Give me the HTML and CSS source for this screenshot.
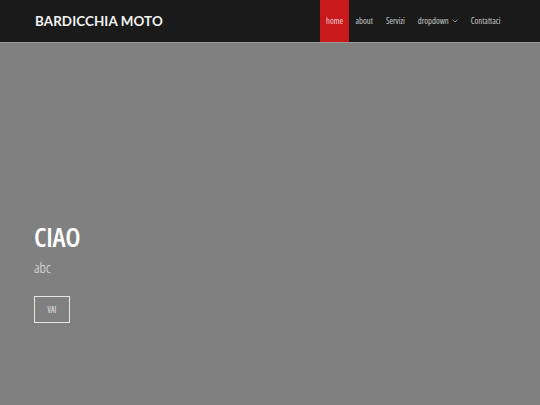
FILE: index.html
```html
<!DOCTYPE html>
<html lang="it">
<head>
<meta charset="utf-8">
<title>Bardicchia Moto</title>
<link rel="stylesheet" href="styles.css">
</head>
<body>
<header class="navbar">
  <div class="brand">BARDICCHIA MOTO</div>
  <nav class="menu">
    <a class="item active" href="#">home</a>
    <a class="item" href="#">about</a>
    <a class="item" href="#">Servizi</a>
    <a class="item" href="#">dropdown <svg class="caret" width="6" height="4" viewBox="0 0 6 4"><path d="M0.5 0.5 L3 3 L5.5 0.5" fill="none" stroke="#aaa" stroke-width="0.8"/></svg></a>
    <a class="item" href="#">Contattaci</a>
  </nav>
</header>
<main class="hero">
  <h1 class="title">CIAO</h1>
  <p class="subtitle">abc</p>
  <a class="btn" href="#">VAI</a>
</main>
</body>
</html>
```
FILE: styles.css
```css
* { box-sizing: border-box; }
html, body { margin: 0; height: 100%; }
body {
  background: #808080;
  font-family: "Open Sans", "Liberation Sans", sans-serif;
  overflow: hidden;
}
.navbar {
  height: 43px;
  background: #1a1a1a;
  border-bottom: 1px solid #9a9a9a;
  display: flex;
  align-items: stretch;
  justify-content: space-between;
  padding: 0 33px 0 35px;
}
.brand {
  color: #f2f2f2;
  font-family: "Lato", sans-serif;
  font-weight: 700;
  font-size: 13.4px;
  letter-spacing: 0.1px;
  display: flex;
  align-items: center;
}
.menu {
  display: flex;
  align-items: stretch;
}
.item {
  color: #c8c8c8;
  text-decoration: none;
  font-size: 8.6px;
  font-stretch: 75%;
  display: flex;
  align-items: center;
  padding: 0 6.5px;
}
.item.active {
  background: #c8191b;
  color: #f0d0d0;
  padding: 0 6px;
}
.caret { margin-left: 3px; }
.hero {
  padding: 180px 34px 0;
}
.title {
  margin: 0;
  color: #ffffff;
  font-family: "Open Sans", sans-serif;
  font-weight: 600;
  font-stretch: 87.5%;
  font-size: 27px;
  letter-spacing: -0.3px;
  line-height: 1;
}
.subtitle {
  margin: 11px 0 0;
  color: #e8e8e8;
  font-family: "Open Sans", sans-serif;
  font-weight: 300;
  font-stretch: 87.5%;
  font-size: 14.5px;
  line-height: 1;
}
.btn {
  display: inline-flex;
  align-items: center;
  justify-content: center;
  margin-top: 20px;
  width: 36px;
  height: 27px;
  border: 1px solid #e6e6e6;
  color: #e0e0e0;
  font-size: 8px;
  font-stretch: 75%;
  text-decoration: none;
}
```
